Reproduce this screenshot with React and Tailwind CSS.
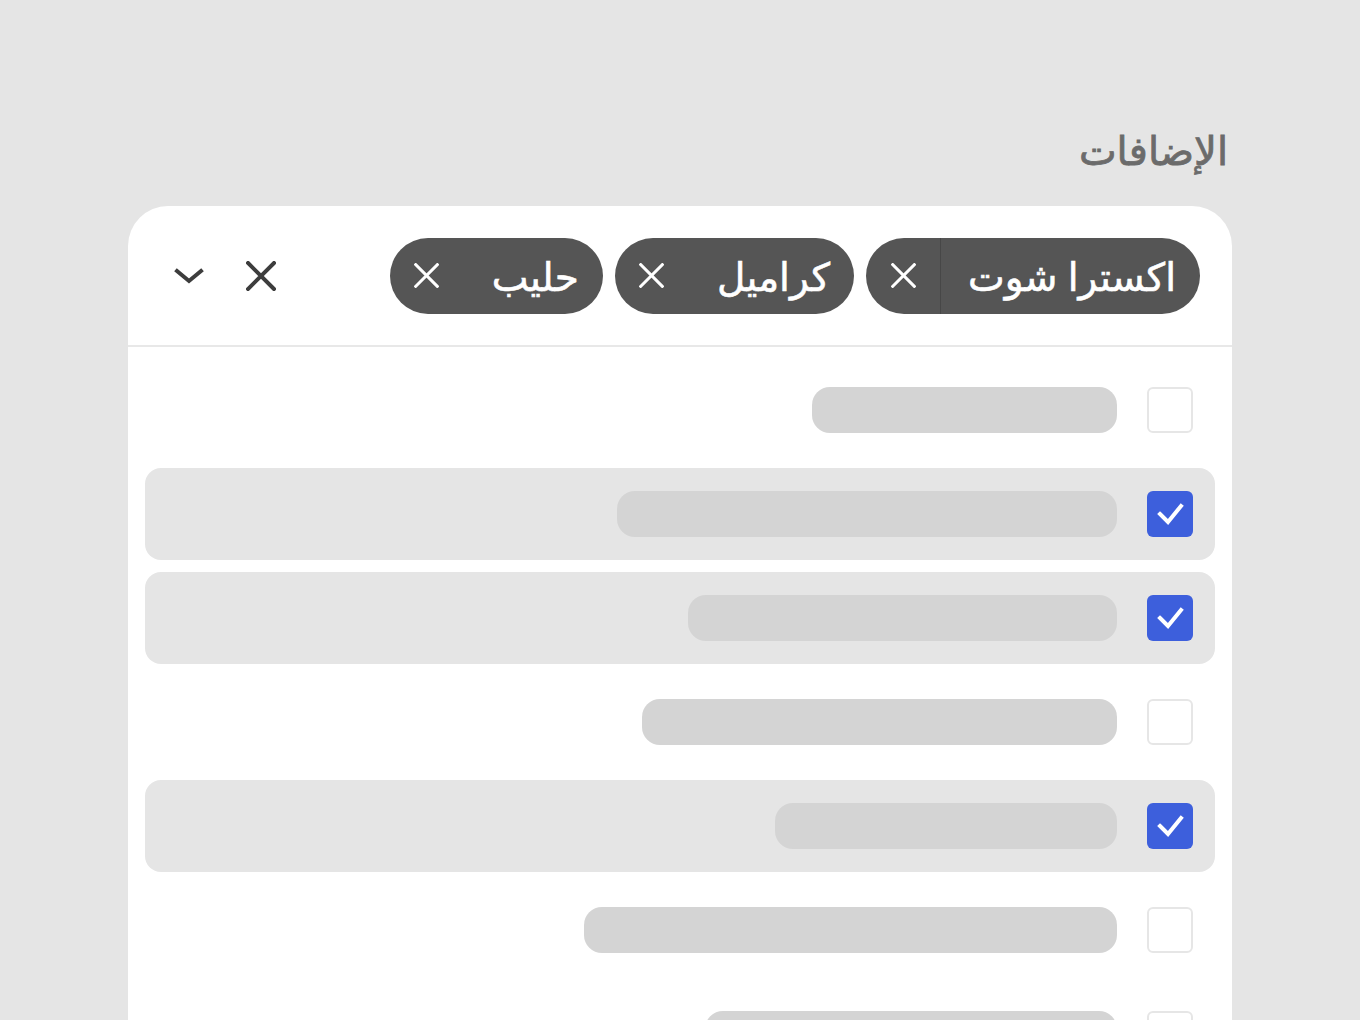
const chips = [
  { label: "اكسترا شوت", divider: "border-[#474747]" },
  { label: "كراميل", divider: "border-[#555555]" },
  { label: "حليب", divider: "border-[#555555]" },
];

const rows = [
  { w: 305, checked: false },
  { w: 500, checked: true },
  { w: 429, checked: true },
  { w: 475, checked: false },
  { w: 342, checked: true },
  { w: 533, checked: false },
  { w: 412, checked: false },
];

function Cross({ size, stroke }) {
  return (
    <svg width={size} height={size} viewBox="0 0 30 30" fill="none" stroke="currentColor" strokeWidth={stroke} strokeLinecap="square">
      <path d="M2 2 28 28M28 2 2 28" />
    </svg>
  );
}

function Chevron() {
  return (
    <svg width="30" height="16" viewBox="0 0 30 16" fill="none" stroke="currentColor" strokeWidth="4" strokeLinecap="square">
      <path d="M3 3 15 13 27 3" />
    </svg>
  );
}

function Chip({ label, divider }) {
  return (
    <div className="flex h-[76px] items-center rounded-full bg-[#555555] text-white">
      <span
        className={`flex h-full items-center border-l pr-[24px] pl-[27px] text-[39px] leading-none [-webkit-text-stroke:0.6px_white] ${divider}`}
      >
        {label}
      </span>
      <button className="flex h-full w-[74px] items-center justify-center">
        <Cross size={25} stroke={3.6} />
      </button>
    </div>
  );
}

function Row({ w, checked }) {
  return (
    <div
      className={`flex h-[92px] items-center gap-[30px] rounded-[16px] pr-[22px] ${checked ? "bg-[#e5e5e5]" : ""}`}
    >
      {checked ? (
        <span className="flex h-[46px] w-[46px] items-center justify-center rounded-[6px] bg-[#3d5fdc] text-white">
          <svg width="46" height="46" viewBox="0 0 46 46" fill="none" stroke="currentColor" strokeWidth="4" strokeLinecap="square">
            <path d="M13 23 21 31 34 15" />
          </svg>
        </span>
      ) : (
        <span className="h-[46px] w-[46px] rounded-[6px] border-2 border-[#e6e6e6] bg-white" />
      )}
      <span className="h-[46px] rounded-[18px] bg-[#d4d4d4]" style={{ width: w }} />
    </div>
  );
}

export default function App() {
  return (
    <div
      dir="rtl"
      className="h-[1020px] overflow-hidden bg-[#e5e5e5]"
      style={{ fontFamily: '"Noto Sans", "DejaVu Sans", sans-serif' }}
    >
      <div className="mx-auto w-[1104px] pt-[118px]">
        <h2 className="pr-[4px] pb-[24px] text-[40px] leading-[64px] font-normal text-[#6b6b6b] [-webkit-text-stroke:0.8px_#6b6b6b]">
          الإضافات
        </h2>
        <div className="rounded-t-[40px] bg-white">
          <div className="flex h-[141px] items-center justify-between border-b-2 border-[#e8e8e8] pr-[32px] pl-[46px]">
            <div className="flex gap-[12px]">
              {chips.map((c) => (
                <Chip key={c.label} {...c} />
              ))}
            </div>
            <div className="flex items-center gap-[42px] text-[#3d3d3d]">
              <Cross size={30} stroke={4} />
              <Chevron />
            </div>
          </div>
          <div className="flex flex-col gap-[12px] px-[17px] pt-[17px]">
            {rows.map((r, i) => (
              <Row key={i} {...r} />
            ))}
          </div>
        </div>
      </div>
    </div>
  );
}
